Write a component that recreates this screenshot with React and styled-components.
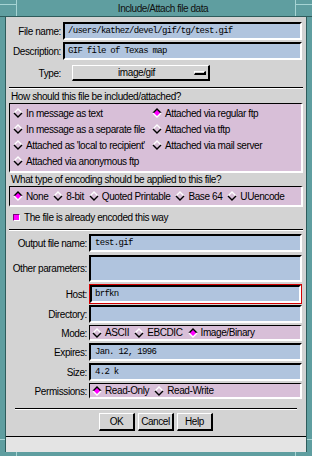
import React from 'react';
import styled, { createGlobalStyle } from 'styled-components';

const TEAL = '#5f9ea0';
const TEAL_LIGHT = '#a6d4d4';
const TEAL_DARK = '#2e5c5c';
const GRAY = '#d3d3d3';
const PURPLE = '#d8bfd8';
const BLUE = '#b0c4de';
const MAGENTA = '#ff00ff';

const GlobalStyle = createGlobalStyle`
  html, body { margin: 0; padding: 0; }
  body {
    width: 312px; height: 456px; overflow: hidden; background: ${TEAL};
    font-family: "Liberation Sans", Arial, sans-serif;
  }
`;

const Window = styled.div`
  width: 312px; height: 456px;
  display: flex; flex-direction: column;
  background: ${TEAL};
`;

const TitleBar = styled.div`
  height: 16px; flex: none;
  display: flex;
  border-bottom: 1px solid ${TEAL_DARK};
`;

const Corner = styled.div`
  width: 16px; flex: none;
  border-left: ${p => (p.$side === 'right' ? `1px solid ${TEAL_LIGHT}` : 'none')};
  border-right: ${p => (p.$side === 'left' ? `1px solid ${TEAL_LIGHT}` : 'none')};
`;

const CornerTop = styled.div`
  height: 4px;
  border-bottom: 1px solid ${TEAL_LIGHT};
`;

const Title = styled.div`
  flex: 1;
  display: flex; align-items: center; justify-content: center;
  padding-left: 14px;
  font-size: 10px; letter-spacing: -0.45px;
  color: #101010;
`;

const Middle = styled.div`
  flex: 1; display: flex;
`;

const Side = styled.div`
  width: 5px; flex: none;
  display: flex; flex-direction: column;
`;

const SideFill = styled.div`flex: 1;`;
const SideCorner = styled.div`
  height: 12px;
  border-top: 1px solid ${TEAL_LIGHT};
`;

const Content = styled.div`
  width: 300px; flex: none;
  border-left: 1px solid ${TEAL_DARK};
  border-right: 1px solid ${TEAL_DARK};
  background: ${GRAY};
  display: flex; flex-direction: column;
`;

const Main = styled.div`
  height: 419px; flex: none;
  display: flex; flex-direction: column;
  padding-top: 5px;
  box-sizing: border-box;
`;

const BottomStrip = styled.div`
  flex: 1;
  border-top: 1px solid #000;
  background: #e4e4e4;
`;

const BottomFrame = styled.div`
  height: 4px; flex: none; display: flex;
`;

const BottomCorner = styled.div`
  width: 16px; flex: none;
  border-left: ${p => (p.$side === 'right' ? `1px solid ${TEAL_LIGHT}` : 'none')};
  border-right: ${p => (p.$side === 'left' ? `1px solid ${TEAL_LIGHT}` : 'none')};
`;
const BottomMid = styled.div`flex: 1;`;

const Row = styled.div`
  display: flex; align-items: center;
  height: ${p => p.$h}px;
  margin-top: ${p => p.$mt || 0}px;
  padding-right: 4px;
  flex: none;
`;

const Label = styled.span`
  width: ${p => p.$w}px; flex: none;
  text-align: right;
  margin-right: 2px;
  font-size: 10px; letter-spacing: -0.4px;
  color: #000;
  white-space: nowrap;
`;

const Entry = styled.div`
  flex: 1; align-self: stretch;
  box-sizing: border-box;
  background: ${BLUE};
  border-style: solid; border-width: 2px;
  border-color: #000 #fff #fff #000;
  padding-left: ${p => p.$pad || 3}px;
  display: flex; align-items: center;
  font-family: "Liberation Mono", "DejaVu Sans Mono", monospace;
  font-size: 9px; letter-spacing: -0.7px;
  color: #000;
  white-space: nowrap; overflow: hidden;
`;

const FocusRing = styled.div`
  flex: 1; align-self: stretch;
  border: 1px solid #d40000;
  display: flex;
`;

const OptionButton = styled.div`
  width: 138px; height: 16px; box-sizing: border-box;
  margin-left: 9px;
  border-style: solid; border-width: 1px 2px 2px 1px;
  border-color: #fff #000 #000 #fff;
  display: flex; align-items: center;
  font-size: 10px; letter-spacing: -0.4px;
`;

const OptionText = styled.span`
  flex: 1; text-align: center; padding-left: 6px;
`;

const Indicator = styled.span`
  width: 12px; height: 4px; box-sizing: border-box;
  margin-right: 2px;
  border-style: solid; border-width: 1px 2px 2px 1px;
  border-color: #fff #000 #000 #fff;
`;

const Separator = styled.div`
  flex: none;
  border-top: 1px solid #000;
  border-bottom: 1px solid #fff;
  margin: ${p => p.$mt}px ${p => p.$mx}px 0;
`;

const SectionLabel = styled.div`
  flex: none;
  height: ${p => p.$h}px;
  display: flex; align-items: center;
  padding-left: 5px;
  font-size: 10px; letter-spacing: -0.4px;
`;

const Box = styled.div`
  flex: none;
  margin: 0 3px;
  background: ${PURPLE};
  border-style: solid; border-width: 1px 2px 2px 1px;
  border-color: #000 #fff #fff #000;
  padding: 1px 0 ${p => p.$pb || 0}px 3px;
`;

const RadioGrid = styled.div`
  display: grid;
  grid-template-columns: 139px 1fr;
  grid-auto-rows: 16px;
`;

const RadioLine = styled.div`
  display: flex; align-items: center;
  height: 16px;
  gap: 5px;
`;

const RadioItem = styled.label`
  display: flex; align-items: center;
  font-size: 10px; letter-spacing: -0.4px;
  color: #000;
  white-space: nowrap;
`;

const DiamondSvg = styled.svg`
  flex: none;
  margin-right: 3px;
`;

const FieldBox = styled.div`
  flex: 1; align-self: stretch;
  box-sizing: border-box;
  background: ${PURPLE};
  border-style: solid; border-width: 1px 2px 2px 1px;
  border-color: #000 #fff #fff #000;
  display: flex; align-items: center;
  gap: 5px;
  padding-left: 2px;
`;

const CheckRow = styled.div`
  flex: none;
  height: 20px;
  display: flex; align-items: center;
  padding-left: 7px;
  font-size: 10px; letter-spacing: -0.4px;
`;

const CheckSquare = styled.span`
  width: 7px; height: 7px; box-sizing: border-box;
  background: ${MAGENTA};
  border-style: solid; border-width: 1px;
  border-color: #7a007a #fff #fff #7a007a;
  margin-right: 4px;
`;

const ButtonBar = styled.div`
  flex: none;
  display: flex; justify-content: center;
  gap: 3px;
  margin-top: 3px;
`;

const Button = styled.div`
  width: 36px; height: 18px; box-sizing: border-box;
  border-style: solid; border-width: 1px 2px 2px 1px;
  border-color: #fff #000 #000 #fff;
  display: flex; align-items: center; justify-content: center;
  font-size: 10px; letter-spacing: -0.4px;
`;

function Diamond({ on }) {
  return (
    <DiamondSvg width="10" height="10" viewBox="0 0 10 10">
      {on && <polygon points="5,1 9,5 5,9 1,5" fill={MAGENTA} />}
      <polyline points="1,5 5,1 9,5" fill="none" stroke={on ? '#000' : '#fff'} strokeWidth="1.4" />
      <polyline points="1,5 5,9 9,5" fill="none" stroke={on ? '#fff' : '#000'} strokeWidth="1.4" />
    </DiamondSvg>
  );
}

function Radio({ on, children }) {
  return (
    <RadioItem>
      <Diamond on={on} />
      {children}
    </RadioItem>
  );
}

function Field({ label, h = 18, mt = 2, children }) {
  return (
    <Row $h={h} $mt={mt}>
      <Label $w={81}>{label}</Label>
      {children}
    </Row>
  );
}

export default function App() {
  return (
    <>
      <GlobalStyle />
      <Window>
        <TitleBar>
          <Corner $side="left"><CornerTop /></Corner>
          <Title>Include/Attach file data</Title>
          <Corner $side="right"><CornerTop /></Corner>
        </TitleBar>
        <Middle>
          <Side><SideFill /><SideCorner /></Side>
          <Content>
            <Main>
              <Row $h={18}>
                <Label $w={55}>File name:</Label>
                <Entry>/users/kathez/devel/gif/tg/test.gif</Entry>
              </Row>
              <Row $h={18} $mt={2}>
                <Label $w={55}>Description:</Label>
                <Entry>GIF file of Texas map</Entry>
              </Row>
              <Row $h={16} $mt={5}>
                <Label $w={55}>Type:</Label>
                <OptionButton>
                  <OptionText>image/gif</OptionText>
                  <Indicator />
                </OptionButton>
              </Row>
              <Separator $mt={6} $mx={3} />
              <SectionLabel $h={14}>How should this file be included/attached?</SectionLabel>
              <Box $pb={2}>
                <RadioGrid>
                  <Radio>In message as text</Radio>
                  <Radio on>Attached via regular ftp</Radio>
                  <Radio>In message as a separate file</Radio>
                  <Radio>Attached via tftp</Radio>
                  <Radio>Attached as 'local to recipient'</Radio>
                  <Radio>Attached via mail server</Radio>
                  <Radio>Attached via anonymous ftp</Radio>
                </RadioGrid>
              </Box>
              <SectionLabel $h={13}>What type of encoding should be applied to this file?</SectionLabel>
              <Box $pb={1}>
                <RadioLine>
                  <Radio on>None</Radio>
                  <Radio>8-bit</Radio>
                  <Radio>Quoted Printable</Radio>
                  <Radio>Base 64</Radio>
                  <Radio>UUencode</Radio>
                </RadioLine>
              </Box>
              <CheckRow>
                <CheckSquare />
                The file is already encoded this way
              </CheckRow>
              <Separator $mt={2} $mx={3} />
              <Field label="Output file name:" mt={3}>
                <Entry $pad={4}>test.gif</Entry>
              </Field>
              <Field label="Other parameters:" h={27} mt={3}>
                <Entry $pad={4} />
              </Field>
              <Field label="Host:" h={20} mt={2}>
                <FocusRing>
                  <Entry $pad={3}>brfkn</Entry>
                </FocusRing>
              </Field>
              <Field label="Directory:" mt={1}>
                <Entry $pad={4} />
              </Field>
              <Field label="Mode:" h={16}>
                <FieldBox>
                  <Radio>ASCII</Radio>
                  <Radio>EBCDIC</Radio>
                  <Radio on>Image/Binary</Radio>
                </FieldBox>
              </Field>
              <Field label="Expires:">
                <Entry $pad={4}>Jan. 12, 1996</Entry>
              </Field>
              <Field label="Size:">
                <Entry $pad={4}>4.2 k</Entry>
              </Field>
              <Field label="Permissions:" h={16}>
                <FieldBox>
                  <Radio on>Read-Only</Radio>
                  <Radio>Read-Write</Radio>
                </FieldBox>
              </Field>
              <Separator $mt={9} $mx={9} />
              <ButtonBar>
                <Button>OK</Button>
                <Button>Cancel</Button>
                <Button>Help</Button>
              </ButtonBar>
            </Main>
            <BottomStrip />
          </Content>
          <Side><SideFill /><SideCorner /></Side>
        </Middle>
        <BottomFrame>
          <BottomCorner $side="left" />
          <BottomMid />
          <BottomCorner $side="right" />
        </BottomFrame>
      </Window>
    </>
  );
}
